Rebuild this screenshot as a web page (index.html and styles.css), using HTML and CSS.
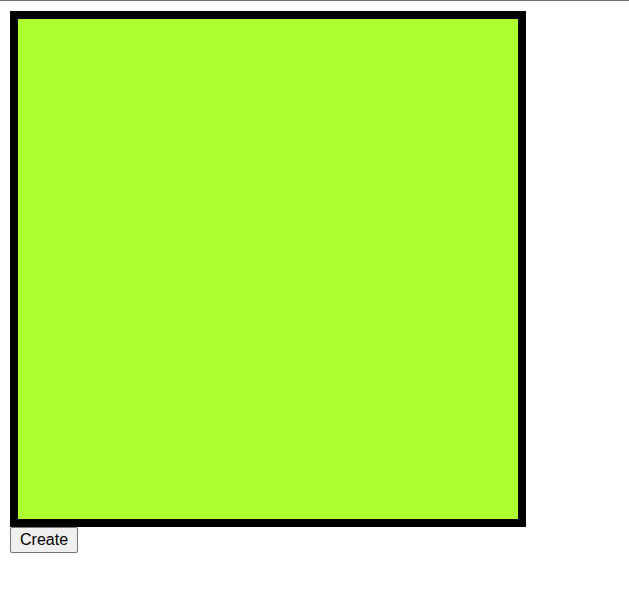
FILE: index.html
```html
<!DOCTYPE html>
<html>
<head>
<meta charset="utf-8">
<link rel="stylesheet" href="styles.css">
</head>
<body>
<div class="topline"></div>
<main class="stage">
  <div class="board"></div>
  <button class="create-btn">Create</button>
</main>
</body>
</html>
```
FILE: styles.css
```css
html, body {
  margin: 0;
  padding: 0;
  background: #fff;
}
.topline {
  height: 1px;
  background: #6f6f6f;
}
.stage {
  display: flex;
  flex-direction: column;
  align-items: flex-start;
  padding: 10px 10px 0 10px;
}
.board {
  width: 500px;
  height: 500px;
  border: 8px solid #000;
  background: #adff2f;
}
.create-btn {
  font-family: "Liberation Sans", Arial, sans-serif;
  font-size: 16px;
  line-height: 18px;
  color: #000;
  background: #efefef;
  border: 1px solid #767676;
  border-radius: 2px;
  padding: 3px 9px 3px 9px;
  margin: 0;
}
```
